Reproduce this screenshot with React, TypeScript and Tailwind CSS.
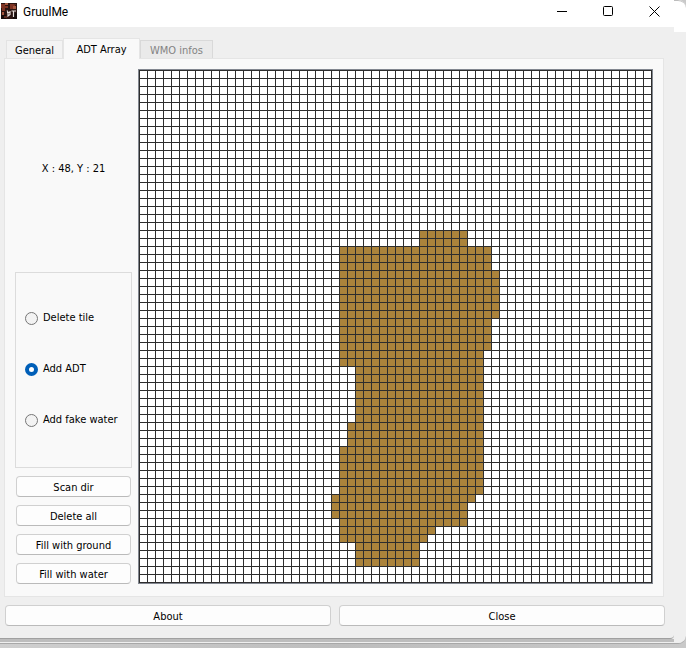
import type { ReactNode } from "react";

const CELL = 8;
const COUNT = 64;
const SIZE = CELL * COUNT + 1;

// Ground tiles as runs: [first row, row after last, first column, column after last]
const GROUND: [number, number, number, number][] = [
  [20, 22, 35, 41],
  [22, 25, 25, 44],
  [25, 31, 25, 45],
  [31, 35, 25, 44],
  [35, 37, 25, 43],
  [37, 44, 27, 43],
  [44, 47, 26, 43],
  [47, 53, 25, 43],
  [53, 54, 24, 42],
  [54, 56, 24, 41],
  [56, 57, 25, 41],
  [57, 58, 25, 37],
  [58, 59, 25, 36],
  [59, 62, 27, 35],
];

const LINES = Array.from({ length: COUNT + 1 }, (_, i) => i * CELL);

function TileMap() {
  return (
    <svg
      role="img"
      aria-label="ADT tiles"
      width={SIZE}
      height={SIZE}
      viewBox={`0 0 ${SIZE} ${SIZE}`}
      shapeRendering="crispEdges"
      className="box-content block shrink-0 border border-[#828790] bg-white"
    >
      {GROUND.map(([r0, r1, c0, c1]) => (
        <rect key={r0} x={c0 * CELL} y={r0 * CELL} width={(c1 - c0) * CELL} height={(r1 - r0) * CELL} fill="#ab833b" />
      ))}
      {LINES.map((p) => (
        <g key={p} fill="#2d2d2d">
          <rect x={p} y={0} width={1} height={SIZE} />
          <rect x={0} y={p} width={SIZE} height={1} />
        </g>
      ))}
    </svg>
  );
}

function PushButton({ children }: { children: ReactNode }) {
  return (
    <button
      type="button"
      className="h-[21px] w-full rounded border border-[#d0d0d0] border-b-[#bababa] bg-[#fdfdfd] text-center leading-[21px]"
    >
      {children}
    </button>
  );
}

function Radio({ label, checked }: { label: string; checked?: boolean }) {
  return (
    <label className="flex h-4 items-center gap-[5px]">
      <input
        type="radio"
        name="tool"
        defaultChecked={checked}
        className="size-[13px] shrink-0 appearance-none rounded-full border border-[#767676] bg-[#f3f3f3] checked:border-4 checked:border-[#005fb8] checked:bg-white"
      />
      <span className="pt-px whitespace-nowrap">{label}</span>
    </label>
  );
}

function AppIcon() {
  return (
    <svg width="16" height="16" viewBox="0 0 16 16" aria-hidden="true">
      <rect width="16" height="16" fill="#2a1411" />
      <path d="M0 1h4v2h3v2H4v3H1V5H0zM9 1h5v3h-2v2H9z" fill="#7d3222" />
      <path d="M4 0h3v2H4zM12 3h3v3h-3zM1 9h2v3H1z" fill="#a5573f" />
      <path d="M0 12h5v4H0zM12 10h4v6h-4z" fill="#160c0b" />
      <path d="M3 13h3v2H3zM13 1h2v1h-2z" fill="#5b2a20" />
      <path d="M6 7.5l1 1.5M6 9.5h3M9 8v3.5L7 13V10M10.5 8h4.5M12.5 8v6" fill="none" stroke="#e6dedb" strokeWidth="1.2" />
    </svg>
  );
}

export default function App() {
  return (
    <div className="min-h-screen bg-linear-to-r from-[#cfcfcf] via-[#bdbdbd] to-[#c9c9c9] font-['DejaVu_Sans_Condensed','DejaVu_Sans',sans-serif] text-[11px] text-black">
      <div className="overflow-hidden rounded-r-lg border-b border-[#a8a8a8] bg-[#efefef]">
        <div className="flex">
          <div className="min-w-0 flex-1 rounded-br border-b border-[#a0a0a0]">
            <header className="flex h-[27px] bg-white">
              <div className="flex flex-1 items-start gap-[6px] pt-[3px] pl-px">
                <AppIcon />
                <h1 className="font-[Roboto,'Open_Sans',sans-serif] text-xs leading-[18px]">GruulMe</h1>
              </div>
              <div className="flex gap-[6px]">
                <button type="button" aria-label="Minimize" className="flex h-[23px] w-10 items-center justify-center">
                  <svg width="11" height="11" viewBox="0 0 11 11" aria-hidden="true">
                    <path d="M0 5.5h10" stroke="#000" />
                  </svg>
                </button>
                <button type="button" aria-label="Maximize" className="flex h-[23px] w-10 items-center justify-center">
                  <svg width="11" height="11" viewBox="0 0 11 11" aria-hidden="true">
                    <rect x="0.5" y="0.5" width="9" height="9" rx="1" fill="none" stroke="#000" />
                  </svg>
                </button>
                <button type="button" aria-label="Close window" className="flex h-[23px] w-10 items-center justify-center">
                  <svg width="11" height="11" viewBox="0 0 11 11" aria-hidden="true">
                    <path d="M0.5 0.5l10 10M10.5 0.5l-10 10" stroke="#000" />
                  </svg>
                </button>
              </div>
            </header>
            <main className="pt-[11px] pr-[9px] pb-3 pl-[5px]">
              <div role="tablist" className="flex items-end">
                <button role="tab" type="button" className="ml-px h-[18px] w-[57px] border border-b-0 border-[#e3e3e3] bg-[#f3f3f3] leading-[20px]">
                  General
                </button>
                <button role="tab" type="button" aria-selected="true" className="relative z-10 -mb-px h-[21px] w-[77px] border border-b-0 border-[#e5e5e5] bg-[#f9f9f9] leading-[21px]">
                  ADT Array
                </button>
                <button role="tab" type="button" disabled className="h-[18px] w-[73px] border border-b-0 border-[#d9d9d9] bg-[#eaeaea] leading-[20px] text-[#838383]">
                  WMO infos
                </button>
              </div>
              <section className="mr-px -ml-px flex gap-[6px] border border-[#e5e5e5] bg-[#f9f9f9] px-[10px] pt-[10px] pb-3">
                <div className="flex min-w-0 flex-1 flex-col">
                  <p className="flex h-[203px] items-center justify-center pb-[2px]">X : 48, Y : 21</p>
                  <fieldset className="flex flex-col gap-[35px] border border-[#dcdcdc] pt-[37px] pb-[39px] pl-[9px]">
                    <Radio label="Delete tile" />
                    <Radio label="Add ADT" checked />
                    <Radio label="Add fake water" />
                  </fieldset>
                  <div className="flex flex-col gap-2 px-px pt-2">
                    <PushButton>Scan dir</PushButton>
                    <PushButton>Delete all</PushButton>
                    <PushButton>Fill with ground</PushButton>
                    <PushButton>Fill with water</PushButton>
                  </div>
                </div>
                <TileMap />
              </section>
              <div className="flex gap-2 pt-2">
                <PushButton>About</PushButton>
                <PushButton>Close</PushButton>
              </div>
            </main>
          </div>
          <div className="w-3">
            <div className="h-8 rounded-tr-lg border-t border-[#bdbdbd] bg-white" />
          </div>
        </div>
        <div className="mr-3 h-[3px] bg-[#bdbdbd]" />
        <div className="h-px bg-[#efefef]" />
      </div>
    </div>
  );
}
